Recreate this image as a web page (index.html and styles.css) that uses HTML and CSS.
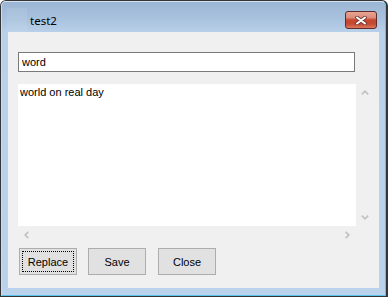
FILE: index.html
```html
<!DOCTYPE html>
<html lang="en">
<head>
    <meta charset="UTF-8">
    <title>test2</title>
    <link rel="stylesheet" href="styles.css">
</head>
<body>
    <div class="window">
        <div class="frame">
            <div class="titlebar">
                <span class="app-icon"></span>
                <span class="title">test2</span>
                <button class="close-btn" type="button">
                    <svg width="12" height="9" viewBox="0 0 12 9">
                        <path d="M2 1.5 L10 7.5 M10 1.5 L2 7.5" stroke="#6b3a36" stroke-width="3.6" stroke-linecap="round" fill="none"/>
                        <path d="M2 1.5 L10 7.5 M10 1.5 L2 7.5" stroke="#ffffff" stroke-width="2" stroke-linecap="round" fill="none"/>
                    </svg>
                </button>
            </div>

            <div class="client">
                <input class="find-box" type="text" value="word">

                <div class="rich-box">
                    <div class="rich-text">world on real day</div>
                    <div class="vscroll">
                        <span class="arrow">
                            <svg width="8" height="5" viewBox="0 0 8 5"><polyline points="0.8,4.3 4,1.2 7.2,4.3" stroke="#c2c2c2" stroke-width="1.7" fill="none"/></svg>
                        </span>
                        <span class="arrow">
                            <svg width="8" height="5" viewBox="0 0 8 5"><polyline points="0.8,0.7 4,3.8 7.2,0.7" stroke="#c2c2c2" stroke-width="1.7" fill="none"/></svg>
                        </span>
                    </div>
                    <div class="hscroll">
                        <span class="arrow">
                            <svg width="5" height="8" viewBox="0 0 5 8"><polyline points="4.3,0.8 1.2,4 4.3,7.2" stroke="#c2c2c2" stroke-width="1.7" fill="none"/></svg>
                        </span>
                        <span class="arrow">
                            <svg width="5" height="8" viewBox="0 0 5 8"><polyline points="0.7,0.8 3.8,4 0.7,7.2" stroke="#c2c2c2" stroke-width="1.7" fill="none"/></svg>
                        </span>
                    </div>
                    <div class="corner"></div>
                </div>

                <div class="buttons">
                    <button class="btn focused" type="button"><span>Replace</span></button>
                    <button class="btn" type="button"><span>Save</span></button>
                    <button class="btn" type="button"><span>Close</span></button>
                </div>
            </div>
        </div>
    </div>
</body>
</html>
```

FILE: styles.css
```css
html, body {
    margin: 0;
    padding: 0;
    background: #ffffff;
}

body {
    font-family: 'Liberation Sans', Arial, sans-serif;
    font-size: 11px;
    color: #000000;
}

.window {
    width: 388px;
    height: 297px;
    box-sizing: border-box;
    border-style: solid;
    border-color: #353535;
    border-width: 1px 2px 1px 1px;
    border-radius: 6px 6px 0 0;
    background: linear-gradient(#9ab5d3 0px, #a9c2de 18px, #b9d1ea 32px, #bad2eb 100%);
}

.frame {
    height: 100%;
    box-sizing: border-box;
    border: 1px solid;
    border-color: #d4e2f1 #58c3ea #58c3ea #cbdcee;
    border-radius: 5px 5px 0 0;
    padding: 0 6px 7px 6px;
    display: flex;
    flex-direction: column;
}

.titlebar {
    height: 30px;
    display: flex;
    align-items: flex-start;
}

.app-icon {
    width: 20px;
    height: 24px;
    margin: 6px 0 0 -1px;
    background: rgba(255, 255, 255, 0.08);
}

.title {
    font-family: 'Noto Sans', 'Open Sans', sans-serif;
    font-size: 11.5px;
    line-height: 16px;
    margin: 11px 0 0 3px;
    color: #000000;
}

.close-btn {
    margin: 9px 2px 0 auto;
    width: 32px;
    height: 18px;
    box-sizing: border-box;
    padding: 0;
    border: 1px solid #5e2a2c;
    border-radius: 3px;
    background: linear-gradient(#e8a695 0%, #dc8d78 35%, #c6462f 50%, #c54a32 75%, #dc7a5e 100%);
    display: flex;
    align-items: center;
    justify-content: center;
}

.close-btn svg {
    display: block;
}

.client {
    flex: 1;
    background: #f0f0f0;
    padding: 20px 0 0 10px;
}

.find-box {
    display: block;
    width: 337px;
    height: 20px;
    box-sizing: border-box;
    margin: 0;
    border: 1px solid #7a7a7a;
    padding: 0 3px;
    font-family: 'Liberation Sans', Arial, sans-serif;
    font-size: 11px;
    color: #000000;
    background: #ffffff;
    outline: none;
}

.rich-box {
    margin-top: 12px;
    width: 355px;
    height: 159px;
    display: grid;
    grid-template-columns: 1fr 17px;
    grid-template-rows: 1fr 17px;
}

.rich-text {
    background: #ffffff;
    padding: 2px 2px;
    line-height: 13px;
}

.vscroll {
    display: flex;
    flex-direction: column;
    justify-content: space-between;
}

.hscroll {
    display: flex;
    justify-content: space-between;
}

.arrow {
    width: 17px;
    height: 17px;
    display: flex;
    align-items: center;
    justify-content: center;
}

.arrow svg {
    display: block;
}

.buttons {
    margin-top: 5px;
    padding-left: 1px;
    display: flex;
    gap: 11px;
}

.btn {
    width: 58px;
    height: 27px;
    box-sizing: border-box;
    margin: 0;
    padding: 0;
    border: 1px solid #adadad;
    background: #e1e1e1;
    font-family: 'Liberation Sans', Arial, sans-serif;
    font-size: 11px;
    color: #000000;
    display: flex;
    align-items: center;
    justify-content: center;
}

.btn + .btn + .btn {
    margin-left: 1px;
}

.btn.focused span {
    display: flex;
    align-items: center;
    justify-content: center;
    width: 52px;
    height: 21px;
    box-sizing: border-box;
    border: 1px dotted #000000;
}
```
